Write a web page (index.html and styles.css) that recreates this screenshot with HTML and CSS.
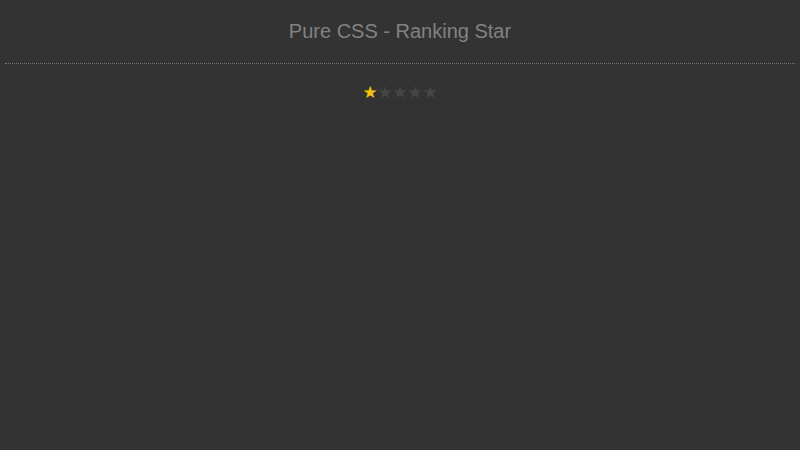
FILE: index.html
```html
<!DOCTYPE html>
<html>
<head>
<meta charset="utf-8">
<link rel="stylesheet" href="styles.css">
</head>
<body>
<h1 class="title">Pure CSS - Ranking Star</h1>
<hr class="divider">
<div class="rating">
  <span class="star on">★</span><span class="star">★</span><span class="star">★</span><span class="star">★</span><span class="star">★</span>
</div>
</body>
</html>
```
FILE: styles.css
```css
html, body {
  margin: 0;
  padding: 0;
  background: #333333;
}
body {
  font-family: "Liberation Sans", Arial, sans-serif;
  padding: 0 5px;
}
.title {
  margin: 0;
  padding-top: 20px;
  height: 23px;
  font-size: 20px;
  line-height: 23px;
  font-weight: normal;
  color: #828282;
  text-align: center;
}
.divider {
  margin: 20px 0 0;
  border: 0;
  border-top: 1px dotted #777;
  height: 0;
}
.rating {
  display: flex;
  justify-content: center;
  margin-top: 19px;
  line-height: 18px;
  font-size: 17px;
  font-family: "DejaVu Sans", sans-serif;
}
.star {
  color: #464646;
  width: 15px;
  text-align: center;
}
.star.on {
  color: #f5c211;
}
```
